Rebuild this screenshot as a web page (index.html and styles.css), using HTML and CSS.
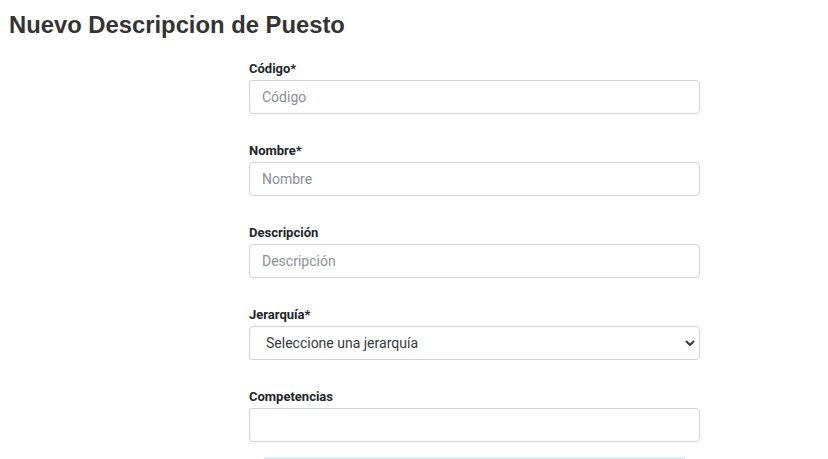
FILE: index.html
```html
<!DOCTYPE html>
<html lang="es">
<head>
<meta charset="utf-8">
<link rel="stylesheet" href="styles.css">
</head>
<body>
<h1 class="title">Nuevo Descripcion de Puesto</h1>
<form class="form">
  <div class="group">
    <label class="label">Código*</label>
    <input class="control" type="text" placeholder="Código">
  </div>
  <div class="group">
    <label class="label">Nombre*</label>
    <input class="control" type="text" placeholder="Nombre">
  </div>
  <div class="group">
    <label class="label">Descripción</label>
    <input class="control" type="text" placeholder="Descripción">
  </div>
  <div class="group">
    <label class="label">Jerarquía*</label>
    <div class="select">
      <span>Seleccione una jerarquía</span>
      <svg class="chev" width="10" height="8" viewBox="0 0 10 8"><path d="M1.5 2.5 L5 6 L8.5 2.5" fill="none" stroke="#343a40" stroke-width="2" stroke-linecap="round" stroke-linejoin="round"/></svg>
    </div>
  </div>
  <div class="group last">
    <label class="label">Competencias</label>
    <div class="control box"></div>
  </div>
  <div class="alert"></div>
</form>
</body>
</html>
```
FILE: styles.css
```css
html, body { margin: 0; padding: 0; background: #fff; }
body { font-family: Roboto, "Liberation Sans", sans-serif; color: #212529; overflow: hidden; height: 459px; }
.title {
  font-family: "Liberation Sans", Arial, sans-serif;
  font-weight: 700;
  font-size: 23.8px;
  line-height: 28px;
  color: #343434;
  margin: 0;
  padding: 11px 0 0 9px;
}
.form { margin: 22px 0 0 249px; width: 451px; }
.group { display: flex; flex-direction: column; margin-bottom: 29px; }
.group.last { margin-bottom: 15px; }
.label { font-size: 13px; font-weight: 700; line-height: 15px; margin-bottom: 4px; color: #212529; display: block; }
.control {
  box-sizing: border-box;
  width: 451px;
  height: 34px;
  border: 1px solid #ced4da;
  border-radius: 4px;
  padding: 0 12px;
  font-family: Roboto, sans-serif;
  font-size: 14px;
  color: #495057;
  background: #fff;
  outline: none;
  margin: 0;
}
.control::placeholder { color: #8a9096; }
.select {
  box-sizing: border-box;
  width: 451px;
  height: 34px;
  border: 1px solid #ced4da;
  border-radius: 4px;
  padding: 0 4px 0 16px;
  font-size: 14px;
  color: #343a40;
  display: flex;
  align-items: center;
  justify-content: space-between;
}
.alert {
  margin: 0 15px 0 15px;
  height: 20px;
  border-top: 2px solid #d6eef5;
  background: #eaf6fb;
}
```
